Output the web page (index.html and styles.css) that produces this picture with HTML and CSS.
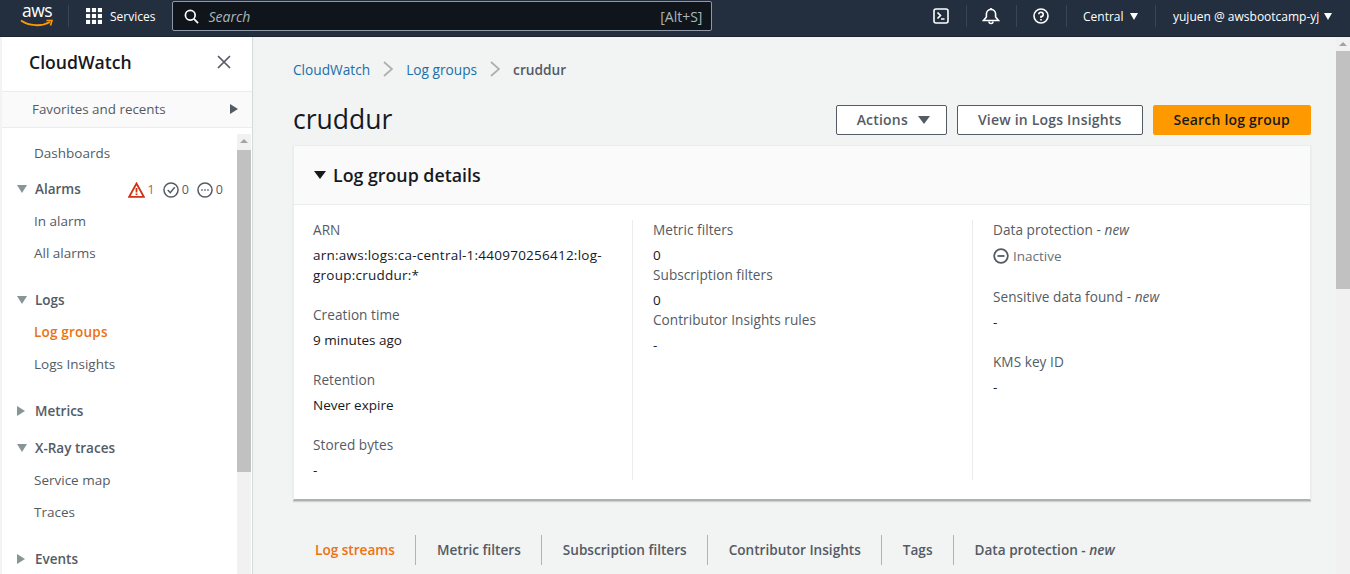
FILE: index.html
```html
<!DOCTYPE html>
<html lang="en">
<head>
<meta charset="utf-8">
<title>cruddur - CloudWatch</title>
<link rel="stylesheet" href="styles.css">
</head>
<body>
<header class="topbar">
  <div class="logo">
    <span class="logo-text">aws</span>
    <svg class="logo-smile" width="34" height="9" viewBox="0 0 34 9"><path d="M1 1.5C9 7 21 8 30 3" fill="none" stroke="#f90" stroke-width="1.8"/><path d="M26.5 1.5L32 1.5L30.5 6.5" fill="none" stroke="#f90" stroke-width="1.6"/></svg>
  </div>
  <span class="top-sep"></span>
  <button class="services">
    <svg width="16" height="16" viewBox="0 0 17 17" fill="#fff"><rect width="4.4" height="4.4"/><rect x="6.3" width="4.4" height="4.4"/><rect x="12.6" width="4.4" height="4.4"/><rect y="6.3" width="4.4" height="4.4"/><rect x="6.3" y="6.3" width="4.4" height="4.4"/><rect x="12.6" y="6.3" width="4.4" height="4.4"/><rect y="12.6" width="4.4" height="4.4"/><rect x="6.3" y="12.6" width="4.4" height="4.4"/><rect x="12.6" y="12.6" width="4.4" height="4.4"/></svg>
    <span>Services</span>
  </button>
  <div class="searchbox">
    <svg width="15" height="15" viewBox="0 0 16 16" fill="none" stroke="#fff" stroke-width="1.8"><circle cx="6.7" cy="6.7" r="5.2"/><path d="M10.6 10.6L15 15"/></svg>
    <span class="search-ph">Search</span>
    <span class="search-key">[Alt+S]</span>
  </div>
  <div class="top-right">
    <div class="top-cell cell-icon">
      <svg width="16" height="16" viewBox="0 0 16 16" fill="none" stroke="#fff" stroke-width="1.6"><rect x="1" y="1" width="14" height="14" rx="2"/><path d="M4.5 4.5L7.5 7.5L4.5 10.5M8 11H11.5"/></svg>
    </div>
    <div class="top-cell cell-icon">
      <svg width="18" height="18" viewBox="0 0 18 18" fill="none" stroke="#fff" stroke-width="1.6"><path d="M1.5 13.5H16.5L13.6 10V7A4.6 4.6 0 0 0 4.4 7V10Z"/><path d="M7 14.5A2 2 0 0 0 11 14.5"/><path d="M9 1V2.5"/></svg>
    </div>
    <div class="top-cell cell-icon">
      <svg width="16" height="16" viewBox="0 0 16 16" fill="none" stroke="#fff" stroke-width="1.6"><circle cx="8" cy="8" r="7"/><path d="M5.8 6.2A2.2 2.2 0 1 1 8 8.6V10"/><path d="M8 11V12.6"/></svg>
    </div>
    <div class="top-cell cell-text cell-region"><span>Central</span><i class="caret-white"></i></div>
    <div class="top-cell cell-text cell-user"><span>yujuen @ awsbootcamp-yj</span><i class="caret-white"></i></div>
  </div>
</header>

<div class="shell">
  <aside class="sidenav">
    <div class="nav-head">
      <span class="nav-title">CloudWatch</span>
      <svg width="14" height="14" viewBox="0 0 14 14" fill="none" stroke="#545b64" stroke-width="1.7"><path d="M1 1L13 13M13 1L1 13"/></svg>
    </div>
    <div class="favorites"><span>Favorites and recents</span><i class="tri-right"></i></div>
    <div class="nav-scroll">
      <nav class="nav-list">
        <a class="nav-link first">Dashboards</a>
        <div class="nav-group">
          <i class="tri-down"></i><b>Alarms</b>
          <span class="alarm-counts">
            <svg width="17" height="16" viewBox="0 0 17 16" fill="none" stroke="#d13212" stroke-width="1.8"><path d="M8.5 1.5L15.8 14.8H1.2Z"/><path d="M8.5 6V10.5M8.5 11.5V13"/></svg>
            <span class="red">1</span>
            <svg class="gap" width="16" height="16" viewBox="0 0 15 15" fill="none" stroke="#545b64" stroke-width="1.4"><circle cx="7.5" cy="7.5" r="6.6"/><path d="M4.5 7.5L6.8 10L11 5"/></svg>
            <span>0</span>
            <svg class="gap" width="16" height="16" viewBox="0 0 15 15" fill="none" stroke="#545b64" stroke-width="1.4"><circle cx="7.5" cy="7.5" r="6.6"/><path d="M4 7.5H5.4M6.8 7.5H8.2M9.6 7.5H11"/></svg>
            <span>0</span>
          </span>
        </div>
        <a class="nav-link">In alarm</a>
        <a class="nav-link">All alarms</a>
        <div class="nav-group spaced"><i class="tri-down"></i><b>Logs</b></div>
        <a class="nav-link active">Log groups</a>
        <a class="nav-link">Logs Insights</a>
        <div class="nav-group spaced"><i class="tri-right small"></i><b>Metrics</b></div>
        <div class="nav-group tight"><i class="tri-down"></i><b>X-Ray traces</b></div>
        <a class="nav-link">Service map</a>
        <a class="nav-link">Traces</a>
        <div class="nav-group spaced"><i class="tri-right small"></i><b>Events</b></div>
      </nav>
      <div class="scrollbar nav-bar"><i class="arrow"></i><div class="thumb"></div></div>
    </div>
  </aside>

  <main class="main">
    <div class="content">
      <div class="crumbs">
        <a>CloudWatch</a>
        <svg width="10" height="16" viewBox="0 0 10 16" fill="none" stroke="#a9b1b3" stroke-width="1.8"><path d="M1 1L9 8L1 15"/></svg>
        <a>Log groups</a>
        <svg width="10" height="16" viewBox="0 0 10 16" fill="none" stroke="#a9b1b3" stroke-width="1.8"><path d="M1 1L9 8L1 15"/></svg>
        <b>cruddur</b>
      </div>
      <div class="page-head">
        <h1>cruddur</h1>
        <div class="actions">
          <button class="btn btn-menu">Actions <i class="tri-btn"></i></button>
          <button class="btn">View in Logs Insights</button>
          <button class="btn primary">Search log group</button>
        </div>
      </div>
      <section class="card">
        <div class="card-head"><i class="tri-card"></i><h2>Log group details</h2></div>
        <div class="card-body">
          <div class="col">
            <dl class="kv"><dt>ARN</dt><dd class="arn">arn:aws:logs:ca-central-1:440970256412:log-group:cruddur:*</dd></dl>
            <dl class="kv"><dt>Creation time</dt><dd>9 minutes ago</dd></dl>
            <dl class="kv"><dt>Retention</dt><dd>Never expire</dd></dl>
            <dl class="kv"><dt>Stored bytes</dt><dd>-</dd></dl>
          </div>
          <div class="col">
            <dl class="kv tight"><dt>Metric filters</dt><dd>0</dd></dl>
            <dl class="kv tight"><dt>Subscription filters</dt><dd>0</dd></dl>
            <dl class="kv tight"><dt>Contributor Insights rules</dt><dd>-</dd></dl>
          </div>
          <div class="col">
            <dl class="kv"><dt>Data protection - <em>new</em></dt>
              <dd class="status"><svg width="16" height="16" viewBox="0 0 16 16" fill="none" stroke="#545b64" stroke-width="1.8"><circle cx="8" cy="8" r="6.8"/><path d="M4.5 8H11.5"/></svg>Inactive</dd></dl>
            <dl class="kv"><dt>Sensitive data found - <em>new</em></dt><dd>-</dd></dl>
            <dl class="kv"><dt>KMS key ID</dt><dd>-</dd></dl>
          </div>
        </div>
      </section>
      <div class="tabs">
        <a class="tab on">Log streams</a>
        <a class="tab">Metric filters</a>
        <a class="tab">Subscription filters</a>
        <a class="tab">Contributor Insights</a>
        <a class="tab">Tags</a>
        <a class="tab">Data protection - <em>new</em></a>
      </div>
    </div>
    <div class="scrollbar main-bar"><i class="arrow"></i><div class="thumb"></div></div>
  </main>
</div>
</body>
</html>
```
FILE: styles.css
```css
* { box-sizing: border-box; }
html, body { margin: 0; height: 574px; overflow: hidden; }
body { font-family: "Open Sans", "Noto Sans", sans-serif; font-size: 14px; color: #16191f; background: #f2f3f3; }
button { font: inherit; }
i { display: block; }

.topbar { height: 37px; background: #232f3e; color: #fff; display: flex; align-items: center; font-size: 12px; padding: 0 0 4px 2px; border-bottom: 1px solid #1b2532; }
.logo { width: 52px; height: 28px; display: flex; flex-direction: column; align-items: center; padding-left: 18px; }
.logo-text { font-size: 17.5px; line-height: 17px; height: 18px; letter-spacing: -0.5px; }
.logo-smile { margin-top: -1px; }
.top-sep { width: 1px; height: 22px; background: #3a4553; margin-left: 14px; }
.services { background: none; border: 0; color: #fff; display: flex; align-items: center; gap: 8px; padding: 0; margin-left: 17px; font-size: 12px; }
.searchbox { margin-left: 17px; width: 540px; height: 30px; background: #10151c; border: 1px solid #8d99a8; border-radius: 2px; display: flex; align-items: center; padding: 0 9px 0 11px; font-size: 14px; }
.search-ph { margin-left: 9px; font-style: italic; color: #aab7b8; flex: 1; }
.search-key { color: #aab7b8; font-size: 14px; }
.top-right { margin-left: auto; display: flex; align-items: center; height: 100%; }
.top-cell { height: 22px; display: flex; align-items: center; justify-content: center; border-left: 1px solid #3a4553; gap: 6px; }
.top-cell:first-child { border-left: 0; }
.cell-icon { width: 50px; padding-right: 1px; }
.cell-text { justify-content: flex-start; padding-left: 16px; }
.cell-region { width: 89px; }
.cell-user { width: 195px; padding-left: 17px; gap: 5px; }
.caret-white { width: 0; height: 0; border-left: 4.5px solid transparent; border-right: 4.5px solid transparent; border-top: 7px solid #fff; }

.shell { height: 537px; display: flex; padding-left: 2px; }
.sidenav { width: 251px; background: #fff; border-right: 1px solid #d5dbdb; display: flex; flex-direction: column; flex: none; }
.nav-head { height: 55px; display: flex; align-items: center; justify-content: space-between; padding: 0 21px 4px 27px; border-bottom: 1px solid #eaeded; flex: none; }
.nav-title { font-size: 17.6px; font-weight: 600; }
.favorites { height: 36px; background: #fafafa; border-bottom: 1px solid #eaeded; color: #545b64; display: flex; align-items: center; justify-content: space-between; padding: 0 14px 2px 30px; flex: none; font-size: 13.4px; }
.tri-right { width: 0; height: 0; border-top: 5px solid transparent; border-bottom: 5px solid transparent; border-left: 8px solid #545b64; }
.tri-right.small { border-left-color: #879596; }
.tri-down { width: 0; height: 0; border-left: 5.5px solid transparent; border-right: 5.5px solid transparent; border-top: 8px solid #879596; }

.nav-scroll { flex: 1; min-height: 0; display: flex; overflow: hidden; }
.nav-list { flex: 1; min-width: 0; padding-left: 32px; }
.nav-link { display: block; height: 32px; line-height: 32px; color: #545b64; font-size: 13.5px; }
.nav-link.first { margin-top: 9px; }
.nav-link.active { color: #ec7211; font-weight: 600; letter-spacing: .2px; }
.nav-group { position: relative; height: 32px; display: flex; align-items: center; color: #545b64; font-size: 13.5px; margin-top: 4px; }
.nav-group b { font-weight: 600; margin-left: 1px; }
.nav-group > .tri-down, .nav-group > .tri-right { position: absolute; left: -17px; }
.nav-group.spaced { margin-top: 15px; }
.nav-group.tight { margin-top: 5px; }
.alarm-counts { position: absolute; right: 14px; top: 8px; display: flex; align-items: center; gap: 3px; font-size: 12.5px; color: #545b64; }
.alarm-counts .red { color: #c8553d; }
.alarm-counts .gap { margin-left: 5px; }

.scrollbar { width: 14px; flex: none; background: #f1f1f1; display: flex; flex-direction: column; align-items: center; }
.nav-bar { margin: 6px 1px 0 0; }
.arrow { width: 0; height: 0; margin: 5px 0; border-left: 4px solid transparent; border-right: 4px solid transparent; border-bottom: 4px solid #a3a3a3; }
.nav-bar .arrow { margin-bottom: 7px; }
.thumb { width: 100%; background: #c1c1c1; }
.nav-bar .thumb { height: 322px; }
.main-bar .thumb { height: 238px; }

.main { flex: 1; min-width: 0; display: flex; }
.content { flex: 1; min-width: 0; padding: 21px 25px 0 40px; }
.crumbs { height: 22px; display: flex; align-items: center; gap: 13px; font-size: 13.7px; color: #0073bb; }
.crumbs a { color: #1b6fa8; }
.crumbs b { color: #545b64; font-weight: 600; }
.page-head { display: flex; align-items: center; justify-content: space-between; margin-top: 14px; height: 50px; }
h1 { margin: 0; font-size: 26.5px; font-weight: 400; }
.actions { display: flex; gap: 10px; margin-top: 2px; }
.btn { height: 30px; padding: 0 20px 2px; background: #fff; border: 1px solid #545b64; border-radius: 2px; color: #545b64; font-weight: 600; font-size: 14px; letter-spacing: .2px; display: flex; align-items: center; gap: 10px; }
.btn.btn-menu { padding-right: 16px; }
.btn.primary { background: #ff9900; border-color: #ff9900; color: #16191f; }
.tri-btn { width: 0; height: 0; margin-top: 2px; border-left: 6px solid transparent; border-right: 6px solid transparent; border-top: 8px solid #545b64; }

.card { margin-top: 1px; height: 356px; background: #fff; border: 1px solid #eaeded; border-bottom: 2px solid #aab2b3; box-shadow: 0 1px 1px rgba(0,28,36,.15); }
.card-head { height: 59px; background: #fafafa; border-bottom: 1px solid #eaeded; display: flex; align-items: center; gap: 7px; padding-left: 20px; }
.tri-card { width: 0; height: 0; border-left: 6px solid transparent; border-right: 6px solid transparent; border-top: 8px solid #16191f; }
h2 { margin: 0; font-size: 17.8px; font-weight: 600; }
.card-body { display: grid; grid-template-columns: 338px 340px 1fr; padding-top: 15px; }
.col { height: 260px; padding: 0 20px; border-left: 1px solid #eaeded; }
.col:first-child { border-left: 0; padding-left: 19px; }
.kv { margin: 0 0 20px; }
.kv dt { height: 20px; line-height: 20px; color: #545b64; font-size: 13.6px; letter-spacing: .05px; }
.kv dd { margin: 5px 0 0; line-height: 20px; font-size: 13.5px; color: #16191f; }
.kv dd.arn { letter-spacing: .24px; }
.kv.tight { margin-bottom: 0; }
.kv em, .tab em { font-style: italic; }
.kv .status { color: #687078; display: flex; align-items: center; gap: 4px; height: 22px; }

.tabs { display: flex; margin-top: 34px; height: 30px; align-items: center; }
.tab { height: 30px; line-height: 30px; padding: 0 20px 0 21px; border-left: 1px solid #aab7b8; color: #545b64; font-weight: 600; font-size: 13.6px; white-space: nowrap; }
.tab:first-child { border-left: 0; padding-left: 22px; }
.tab.on { color: #ec7211; }
```
